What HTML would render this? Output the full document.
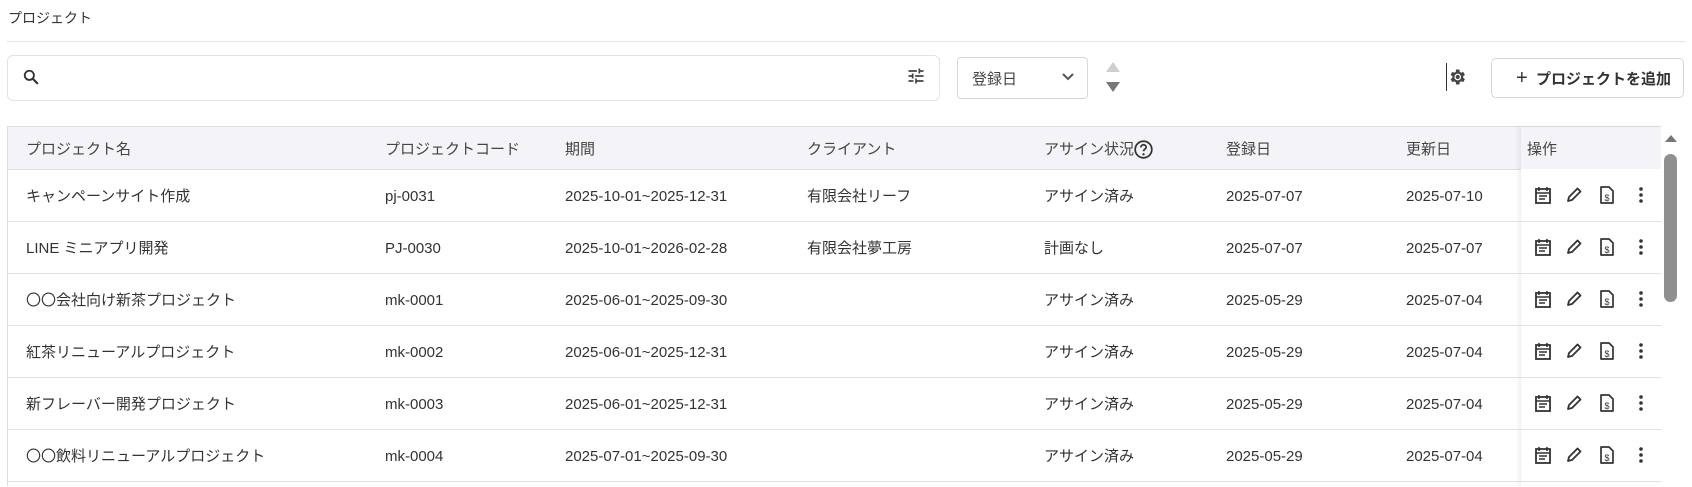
<!DOCTYPE html>
<html><head><meta charset="utf-8"><style>
*{box-sizing:border-box;margin:0;padding:0}
body{width:1692px;height:484px;overflow:hidden;background:#fff;font-family:"Liberation Sans","Noto Sans CJK JP",sans-serif;color:#333;position:relative}
.abs{position:absolute}
.t{font-size:15px;white-space:nowrap;line-height:20px;height:20px}
.hdr{color:#444}
</style></head><body>
<div class="abs" style="left:8px;top:8px;font-size:14px;line-height:20px;color:#333">プロジェクト</div>
<div class="abs" style="left:7px;top:41px;width:1678px;height:1px;background:#e6e6e6"></div>

<div class="abs" style="left:7px;top:55px;width:933px;height:46px;border:1px solid #e3e3e3;border-radius:6px"></div>
<svg class="abs" style="left:21px;top:67px" width="20" height="20" viewBox="0 0 24 24"><circle cx="10" cy="10" r="5.5" fill="none" stroke="#333" stroke-width="2.2"/><path d="M14 14l5.5 5.5" stroke="#333" stroke-width="2.6" stroke-linecap="round"/></svg>
<svg class="abs" style="left:906px;top:66px" width="20" height="20" viewBox="0 0 24 24" fill="#444"><path d="M3 17v2h6v-2H3zM3 5v2h10V5H3zm10 16v-2h8v-2h-8v-2h-2v6h2zM7 9v2H3v2h4v2h2V9H7zm14 4v-2H11v2h10zm-6-4h2V7h4V5h-4V3h-2v6z"/></svg>

<div class="abs" style="left:957px;top:57px;width:131px;height:42px;border:1px solid #d6d6d6;border-radius:4px"></div>
<div class="abs t" style="left:972px;top:70px;color:#444">登録日</div>
<svg class="abs" style="left:1061px;top:72px" width="14" height="10" viewBox="0 0 14 10"><path d="M2 2l5 5 5-5" fill="none" stroke="#555" stroke-width="2"/></svg>
<svg class="abs" style="left:1104px;top:58px" width="18" height="40" viewBox="0 0 18 40"><path d="M2 14L9 4l7 10z" fill="#cfcfcf"/><path d="M2 24h14l-7 10z" fill="#777"/></svg>

<div class="abs" style="left:1446px;top:63px;width:1px;height:28px;background:#333"></div>
<svg class="abs" style="left:1447px;top:67px" width="20" height="20" viewBox="0 0 24 24"><path fill="#444" d="M19.4 13a7.5 7.5 0 000-2l2.1-1.6-2-3.5-2.5 1a7.7 7.7 0 00-1.7-1L14.9 3h-4l-.4 2.9a7.7 7.7 0 00-1.7 1l-2.5-1-2 3.5L6.4 11a7.5 7.5 0 000 2l-2.1 1.6 2 3.5 2.5-1c.5.4 1.1.7 1.700 1l.4 2.9h4l.4-2.9c.6-.3 1.2-.6 1.7-1l2.5 1 2-3.5zM12.9 16a4 4 0 110-8 4 4 0 010 8z"/><circle cx="12.9" cy="12" r="2.5" fill="#444"/></svg>

<div class="abs" style="left:1491px;top:58px;width:193px;height:40px;border:1px solid #d6d6d6;border-radius:5px"></div>
<div class="abs" style="left:1516px;top:68px;font-size:15px;line-height:20px;color:#333;font-weight:bold;white-space:nowrap"><span style="font-weight:normal;font-size:20px">+</span>&nbsp; プロジェクトを追加</div>

<div class="abs" style="left:7px;top:126px;width:1654px;height:360px;border-left:1px solid #ddd;border-top:1px solid #ddd"></div>
<div class="abs" style="left:8px;top:127px;width:1653px;height:42px;background:#f4f4f8"></div>
<div class="abs" style="left:8px;top:169px;width:1653px;height:1px;background:#ddd"></div>
<div class="abs" style="left:1521px;top:127px;width:140px;height:360px;background:#fff;box-shadow:-3px 0 4px rgba(0,0,0,0.06)"></div>
<div class="abs" style="left:1521px;top:127px;width:140px;height:42px;background:#f4f4f8"></div>

<div class="abs t hdr" style="left:26px;top:140px">プロジェクト名</div>
<div class="abs t hdr" style="left:385px;top:140px">プロジェクトコード</div>
<div class="abs t hdr" style="left:565px;top:140px">期間</div>
<div class="abs t hdr" style="left:807px;top:140px">クライアント</div>
<div class="abs t hdr" style="left:1044px;top:140px">アサイン状況</div>
<svg class="abs" style="left:1133px;top:139px" width="21" height="21" viewBox="0 0 24 24"><circle cx="12" cy="12" r="9.5" fill="none" stroke="#333" stroke-width="2"/><path d="M9 9.5a3 3 0 116 0c0 2-3 2.2-3 4.5" fill="none" stroke="#333" stroke-width="2"/><circle cx="12" cy="17.5" r="1.3" fill="#333"/></svg>
<div class="abs t hdr" style="left:1226px;top:140px">登録日</div>
<div class="abs t hdr" style="left:1406px;top:140px">更新日</div>
<div class="abs t hdr" style="left:1527px;top:140px">操作</div>

<div id="rows"></div>

<svg class="abs" style="left:1664px;top:133px" width="14" height="10" viewBox="0 0 14 10"><path d="M1 9L7 2l6 7z" fill="#777"/></svg>
<div class="abs" style="left:1664px;top:154px;width:13px;height:148px;background:#8f8f8f;border-radius:7px"></div>

<script>
const rows=[
["キャンペーンサイト作成","pj-0031","2025-10-01~2025-12-31","有限会社リーフ","アサイン済み","2025-07-07","2025-07-10"],
["LINE ミニアプリ開発","PJ-0030","2025-10-01~2026-02-28","有限会社夢工房","計画なし","2025-07-07","2025-07-07"],
["〇〇会社向け新茶プロジェクト","mk-0001","2025-06-01~2025-09-30","","アサイン済み","2025-05-29","2025-07-04"],
["紅茶リニューアルプロジェクト","mk-0002","2025-06-01~2025-12-31","","アサイン済み","2025-05-29","2025-07-04"],
["新フレーバー開発プロジェクト","mk-0003","2025-06-01~2025-12-31","","アサイン済み","2025-05-29","2025-07-04"],
["〇〇飲料リニューアルプロジェクト","mk-0004","2025-07-01~2025-09-30","","アサイン済み","2025-05-29","2025-07-04"]];
const xs=[26,385,565,807,1044,1226,1406];
let h="";
rows.forEach((r,i)=>{
 const top=169+i*52;
 r.forEach((c,j)=>{h+=`<div class="abs t" style="left:${xs[j]}px;top:${top+18}px">${c}</div>`;});
 h+=`<div class="abs" style="left:8px;top:${top+52}px;width:1653px;height:1px;background:#e0e0e0"></div>`;
 const cy=top+26;
 h+=`<svg class="abs" style="left:1533px;top:${cy-10}px" width="20" height="20" viewBox="0 0 20 20"><rect x="3" y="4" width="14" height="14" fill="none" stroke="#333" stroke-width="1.8"/><path d="M6 2v4M14 2v4M3 8h14M6 11h8M6 14h6" stroke="#333" stroke-width="1.6"/></svg>`;
 h+=`<svg class="abs" style="left:1564px;top:${cy-10}px" width="20" height="20" viewBox="0 0 20 20"><path d="M4 16l1-4L13.5 3.5l3 3L8 15z" fill="none" stroke="#333" stroke-width="1.8" stroke-linejoin="round"/></svg>`;
 h+=`<svg class="abs" style="left:1598px;top:${cy-10}px" width="18" height="20" viewBox="0 0 18 20"><path d="M3 2h8l4 4v12H3z" fill="none" stroke="#333" stroke-width="1.7" stroke-linejoin="round"/><text x="9" y="16" font-size="9" text-anchor="middle" fill="#333" font-family="Liberation Sans">$</text></svg>`;
 h+=`<svg class="abs" style="left:1636px;top:${cy-10}px" width="10" height="20" viewBox="0 0 10 20"><circle cx="5" cy="4" r="1.8" fill="#333"/><circle cx="5" cy="10" r="1.8" fill="#333"/><circle cx="5" cy="16" r="1.8" fill="#333"/></svg>`;
});
document.getElementById("rows").innerHTML=h;
</script>
</body></html>
